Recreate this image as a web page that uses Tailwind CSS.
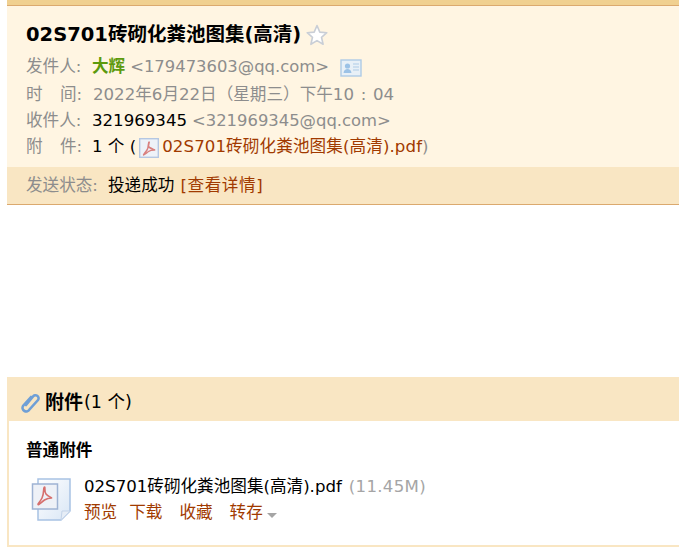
<!DOCTYPE html>
<html lang="zh-CN">
  <head>
    <meta charset="UTF-8" />
    <title>邮件详情</title>
    <script src="https://cdn.jsdelivr.net/npm/@tailwindcss/browser@4"></script>
  </head>
  <body class="bg-white h-[555px] overflow-hidden pl-[7px] font-['DejaVu_Sans','Noto_Sans_CJK_SC',sans-serif] text-[16.6px] text-black">
    <!-- Mail header -->
    <section class="border-b border-b-[#dba96e]">
      <div class="h-[6px] bg-[#f0d090] border-b border-b-[#dba96e]"></div>
      <div class="bg-[#fff5e2] h-[161px] pt-[14px] pl-[19px]">
        <h1 class="flex items-center h-[30px] text-[19.5px] font-bold gap-[5px]">
          02S701砖砌化粪池图集(高清)
          <svg width="22" height="22" viewBox="0 0 22 22"><path d="M11 1.5l2.8 6.6 7 .6-5.300 4.600 1.600 7L11 16.600l-6.100 3.700 1.600-7L1.200 8.700l7-.6z" fill="#fff" stroke="#c9ced6" stroke-width="1.600" stroke-linejoin="round"/></svg>
        </h1>
        <div class="flex items-center h-[27px] mt-[4px] text-[#8d8d8d]">
          <span class="w-[66px]">发件人:</span>
          <b class="text-[#5c9a0c]">大辉</b>
          <span class="ml-[5px] text-[16.4px]">&lt;179473603@qq.com&gt;</span>
          <svg class="ml-[11px]" width="22" height="18" viewBox="0 0 22 18"><rect x="1" y="1" width="20" height="16" fill="#e8f0f7" stroke="#aecbe6" stroke-width="1.400"/><circle cx="7.500" cy="7" r="2.600" fill="#9cc2e6"/><path d="M3.500 14c.4-3 2-4 4-4s3.600 1 4 4z" fill="#9cc2e6"/><path d="M13 5h6M13 8h6M13 11h6" stroke="#aecbe6"/></svg>
        </div>
        <div class="flex items-center h-[25px] mt-[2px] text-[#8d8d8d]">
          <span class="w-[67px] flex"><span class="w-[34px]">时</span>间:</span>
          <span>2022年6月22日（星期三）下午10</span><span class="w-[19px] text-center">:</span><span>04</span>
        </div>
        <div class="flex items-center h-[26px] text-[#8d8d8d]">
          <span class="w-[66px]">收件人:</span>
          <span class="text-black">321969345</span>
          <span class="ml-[5px] text-[16.4px]">&lt;321969345@qq.com&gt;</span>
        </div>
        <div class="flex items-center h-[27px]">
          <span class="w-[66px] flex text-[#8d8d8d]"><span class="w-[34px]">附</span>件:</span>
          <span>1 个 (</span>
          <svg class="ml-[3px]" width="20" height="20" viewBox="0 0 20 20"><rect x=".7" y=".7" width="18.600" height="18.600" fill="#eef2f8" stroke="#b5c7e2" stroke-width="1.400"/><path d="M10 4c-1 0 0 5-2 8s-4 4.500-3.500 5 3-2 5-3.500 5-1.500 6-1.500-2.500-1-5-2.500S11 4 10 4z" fill="none" stroke="#d9807e" stroke-width="1.500"/></svg>
          <a class="text-[#a13a00] ml-[3px] tracking-[.1px]">02S701砖砌化粪池图集(高清).pdf</a>
          <span class="text-[#8d8d8d]">)</span>
        </div>
      </div>
      <div class="bg-[#f9e6c3] h-[37px] pl-[19px] pt-[1px] flex items-center">
        <span class="text-[#8d8d8d] w-[82px]">发送状态:</span>
        <span>投递成功</span>
        <a class="text-[#a13a00] ml-[6px] tracking-[.6px]">[查看详情]</a>
      </div>
    </section>

    <!-- Attachments -->
    <section class="mt-[172px] border-[#f9e6c3] border-l-2 border-b-2 h-[170px]">
      <div class="bg-[#f9e6c3] -ml-[2px] h-[44px] flex items-center pl-[13px] pt-[6px]">
        <svg width="20" height="22" viewBox="0 0 20 22"><path d="M6 14L13 5.500a3 3 0 0 1 5 3.500L9.500 18.500a3.500 3.500 0 0 1-6.500-3.500L11 6" fill="none" stroke="#6f9fd6" stroke-width="2.600" stroke-linecap="round"/></svg>
        <b class="text-[19px] ml-[5px]">附件</b><span class="text-[17.500px] ml-px">(1 个)</span>
      </div>
      <h2 class="font-bold mt-[19px] ml-[17px] leading-[22px]">普通附件</h2>
      <div class="flex mt-[15px] ml-[21px]">
        <svg width="44" height="44" viewBox="0 0 44 44">
          <defs><linearGradient id="page" x1="0" y1="0" x2="1" y2="1"><stop offset="0" stop-color="#ffffff"/><stop offset="1" stop-color="#d9e6f5"/></linearGradient></defs>
          <path d="M8 2h32v32l-9 9H8z" fill="url(#page)" stroke="#a8c2e4" stroke-width="1.500"/>
          <path d="M31 43l1-9h8z" fill="#e6edf6" stroke="#c3d3e8"/>
          <rect x="2.500" y="7" width="25" height="25" fill="#eef1f7" stroke="#9fb3d3" stroke-width="1.500"/>
          <path d="M14.500 10c-1.500 0 0 6-2.500 11s-4.500 5.500-4 6.500 4-3 6.500-4.500 6-2 7-2-3.500-1.500-5.500-4-.5-7-1.500-7z" fill="none" stroke="#d66f6d" stroke-width="1.600"/>
        </svg>
        <div class="ml-[10px] -mt-[3px]">
          <div class="h-[27px] flex items-center">02S701砖砌化粪池图集(高清).pdf<span class="text-[#a5a5a5] ml-[7px] tracking-[.3px]">(11.45M)</span></div>
          <div class="h-[25px] flex items-center text-[#a13a00]">
            <a>预览</a><a class="ml-[12px]">下载</a><a class="ml-[17px]">收藏</a><a class="ml-[17px]">转存</a>
            <span class="ml-[4px] mt-[3px] border-x-[5px] border-t-[5px] border-x-transparent border-t-[#a5a5a5]"></span>
          </div>
        </div>
      </div>
    </section>
  </body>
</html>
